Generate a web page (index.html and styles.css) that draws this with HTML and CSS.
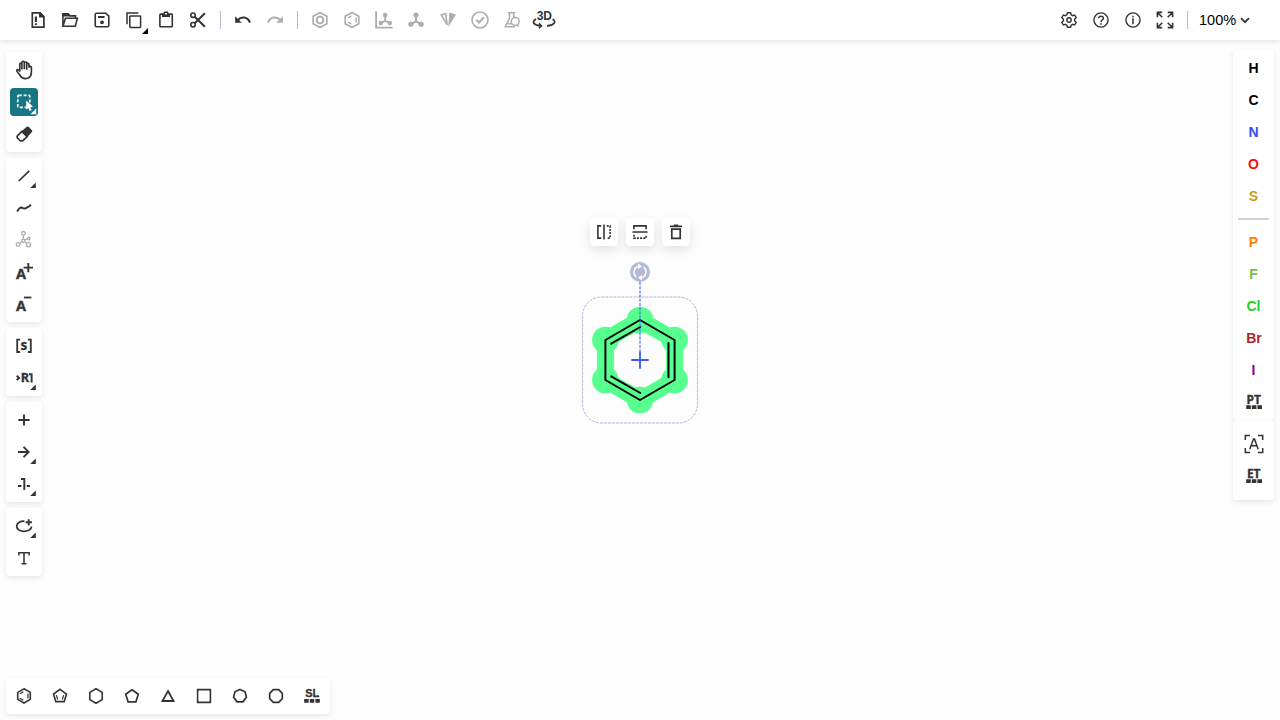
FILE: index.html
```html
<!DOCTYPE html>
<html lang="en">
<head>
<meta charset="utf-8">
<title>Structure editor</title>
<link rel="stylesheet" href="styles.css">
</head>
<body>
<div class="app">
<header class="topbar">
  <button class="tool"><svg viewBox="-16 -16 32 32"><path d="M-5.7-7.2H2L5.9-3.2V7.2H-5.7Z" stroke-width="1.7"/><path class="fill" d="M1-8V-2.6H6.5V-3.6L2.4-8Z"/><path d="M-2.1-3.6V2M-2.1 3.2V5" stroke-width="2.1"/></svg></button>
  <button class="tool"><svg viewBox="-16 -16 32 32"><path d="M-7.1 6.2V-6.1H-2L-.2-4.2H5.4V-1.8M-7 6.2L-4.6-1.7H7.4L5.3 6.2Z"/><path class="fill" d="M-7.9-6.9H-1.7L.1-5H6.2V-3.4H-7.9Z"/></svg></button>
  <button class="tool"><svg viewBox="-16 -16 32 32"><path d="M-6.8-5.3Q-6.8-6.8-5.3-6.8H3.8L6.8-3.8V5.3Q6.8 6.8 5.3 6.8H-5.3Q-6.8 6.8-6.8 5.3Z"/><path d="M-4-3H2.6" stroke-width="2"/><circle class="fill" cx="0" cy="2.3" r="1.9"/></svg></button>
  <button class="tool"><svg viewBox="-16 -16 32 32"><path d="M-7 4.3V-7.1H4.3" stroke-width="1.5"/><rect x="-4.2" y="-4.1" width="10.8" height="11.5" rx=".7" stroke-width="1.5"/><path class="corner" d="M14 8V14H8Z"/></svg></button>
  <button class="tool"><svg viewBox="-16 -16 32 32"><rect x="-6.1" y="-5.9" width="12.4" height="12.7" rx=".7"/><path class="fill" d="M-4-5.5H-2.4V-7.5Q-2.4-8.4-1.5-8.4H1.5Q2.4-8.4 2.4-7.5V-5.5H4V-2.9H-4Z"/><path class="white" d="M-1-7H1V-5.6H-1Z"/></svg></button>
  <button class="tool"><svg viewBox="-16 -16 32 32"><circle cx="-5" cy="-4.8" r="2.2"/><circle cx="-5" cy="4.7" r="2.2"/><path d="M-3.3-3.2L6.9 6.7M-3.3 3.2L6.9-6.7" stroke-width="2"/></svg></button>
  <span class="vsep"></span>
  <button class="tool"><svg viewBox="-16 -16 32 32"><path d="M-5.2 0C-1.6-4 4.6-3.4 7 2.5" stroke-width="2.1"/><path class="fill" d="M-7.8-3.8V2.8H-1.2Z"/></svg></button>
  <button class="tool off"><svg viewBox="-16 -16 32 32"><path d="M5.2 0C1.6-4-4.6-3.4-7 2.5" stroke-width="2.1"/><path class="fill" d="M7.8-3.8V2.8H1.2Z"/></svg></button>
  <span class="vsep"></span>
  <button class="tool off"><svg viewBox="-16 -16 32 32"><path d="M0-7.6L6.8-3.8V3.8L0 7.6L-6.8 3.8V-3.8Z" stroke-width="1.7"/><circle r="3.4" stroke-width="2"/></svg></button>
  <button class="tool off"><svg viewBox="-16 -16 32 32"><path d="M0-7.6L6.8-3.8V3.8L0 7.6L-6.8 3.8V-3.8Z" stroke-width="1.7"/><path d="M-4-2L-.7-4.2M-4 2L-.7 4.2M4.1-2.6V2.6" stroke-width="1.5"/></svg></button>
  <button class="tool off"><svg viewBox="-16 -16 32 32"><path d="M-7.9-8.8V7.6H8.6" stroke-width="1.8"/><path d="M1.2-5V.8L-3.2 3M1.2.8L5.8 3" stroke-width="1.9"/><circle class="fill" cx="1.2" cy="-4.9" r="2.3"/><circle class="fill" cx="-3.2" cy="3" r="2.2"/><circle class="fill" cx="5.8" cy="3" r="2.2"/></svg></button>
  <button class="tool off"><svg viewBox="-16 -16 32 32"><path d="M0-5V1.3L-5 4M0 1.3L5 4" stroke-width="2.1"/><circle class="fill" cx="0" cy="-4.9" r="2.6"/><circle class="fill" cx="-5.1" cy="4.2" r="2.6"/><circle class="fill" cx="5.1" cy="4.2" r="2.6"/></svg></button>
  <button class="tool off"><svg viewBox="-16 -16 32 32"><path d="M-6.7-5L-2.4-6.4L-.8 4.8Z" stroke-width="1.6"/><path class="fill" d="M1.3-7.4L8-5.4L.3 7Z"/></svg></button>
  <button class="tool off"><svg viewBox="-16 -16 32 32"><circle r="8"/><path d="M-3.7-.2L-1 2.5L4-2.7" stroke-width="2"/></svg></button>
  <button class="tool off"><svg viewBox="-16 -16 32 32"><path d="M-4.2-7.2H3.2M-2.5-7V-2L-6.6 6.8H3M1.8-7V-3" stroke-width="1.6"/><circle cx="3.2" cy="1.4" r="3.9" stroke-width="1.5"/><path d="M-4.2 3.7H0M5 4.8L6.4 6.6" stroke-width="1.5"/></svg></button>
  <button class="tool"><svg viewBox="-16 -16 32 32"><text class="glyph" x=".3" y="0" font-size="12">3D</text><path d="M-8-.9C-13 2-10 5.3-3 5.8M8.6-.9C13 2 9.8 5.5 3 5.8" stroke-width="1.7"/><path d="M-5 3.4L-2.4 5.9L-5 8.2" stroke-width="1.5"/></svg></button>
  <span class="spacer"></span>
  <button class="tool"><svg viewBox="-16 -16 32 32"><path d="M-1.6-7.2H1.6L2.1-5.1L3.6-4.3L5.6-5L7.2-2.3L5.6-.8V.8L7.2 2.3L5.6 5L3.6 4.3L2.1 5.1L1.6 7.2H-1.6L-2.1 5.1L-3.6 4.3L-5.6 5L-7.2 2.3L-5.6.8V-.8L-7.2-2.3L-5.6-5L-3.6-4.3L-2.1-5.1Z" stroke-width="1.4"/><circle r="2.2" stroke-width="1.4"/></svg></button>
  <button class="tool"><svg viewBox="-16 -16 32 32"><circle r="7.1" stroke-width="1.4"/><path d="M-2.3-1.8C-2.1-4.5 2.3-4.6 2.3-1.8C2.3-.1 0 .1 0 2.2M0 3.3V4.8" stroke-width="1.5"/></svg></button>
  <button class="tool"><svg viewBox="-16 -16 32 32"><circle r="7.1" stroke-width="1.4"/><path d="M0-1.8V4.2M0-4.2V-2.7" stroke-width="1.5"/></svg></button>
  <button class="tool"><svg viewBox="-16 -16 32 32"><path d="M-7.6-2.8V-7.6H-2.8M2.8-7.6H7.6V-2.8M-7.6 2.8V7.6H-2.8M2.8 7.6H7.6V2.8M-7.3-7.3L-2.7-2.7M7.3-7.3L2.7-2.7M-7.3 7.3L-2.7 2.7M7.3 7.3L2.7 2.7" stroke-width="1.6"/></svg></button>
  <span class="vsep"></span>
  <button class="zoom"><span>100%</span><svg viewBox="0 0 10 7"><path d="M1 1.2L5 5.2L9 1.2"/></svg></button>
</header>

<main class="workspace">
  <nav class="left">
    <div class="panel">
      <button class="tool"><svg viewBox="-16 -16 32 32"><path transform="translate(0 -.4)" d="M-4.2 2V-5.5C-4.2-7-2.1-7-2.1-5.5V0V-7C-2.1-8.7.3-8.7.3-7V-.4V-6.5C.3-8 2.7-8 2.7-6.5V.1V-5C2.7-6.6 5-6.6 5-5V-1.8C5-3.8 7.4-3.5 7.4-1.8V2.5C7.4 10.8-1.7 10.2-4 5.7L-7 1.8C-8-.5-5.6-.9-4.2 2" stroke-width="1.65"/></svg></button>
      <button class="tool active"><svg viewBox="-16 -16 32 32"><rect x="-6.2" y="-6.6" width="12" height="12" rx="1" stroke-dasharray="3 1.8" stroke-width="1.7"/><path class="cursor" d="M2.2-1.4V7.6L4.3 6L5.7 9L7.7 8.2L6.3 5.2L9 4.8Z"/><path class="corner" d="M12.2 6.5V12.2H6.5Z"/></svg></button>
      <button class="tool"><svg viewBox="-16 -16 32 32"><g transform="scale(1.06)"><path class="fill" d="M-2.3-2.6L2.6-6.8Q3.5-7.5 4.3-6.8L7.5-3.6Q8.2-2.8 7.5-2L3.2 2.9Z"/><path d="M-2.1-2.4L2.9 2.6L-.9 6.1Q-2.7 7.1-4 5.9L-6.2 3.7Q-7.1 2.7-6 1.5Z" stroke-width="1.6"/></g></svg></button>
    </div>
    <div class="panel">
      <button class="tool"><svg viewBox="-16 -16 32 32"><path d="M-5.2 5L5.2-5.1" stroke-width="1.7"/><path class="corner" d="M11.8 6.4V12H6.2Z"/></svg></button>
      <button class="tool"><svg viewBox="-16 -16 32 32"><path d="M-6.9 3.5C-4-1-3-1-1 .2C1.8 1.5 2.4-1 4-1C5.3-1 6-2.1 6.8-3.5" stroke-width="2"/></svg></button>
      <button class="tool off"><svg viewBox="-16 -16 32 32"><g stroke-width="1.3"><circle cx="-.6" cy="-6.7" r="1.8"/><circle cx="-6" cy="4.5" r="1.8"/><circle cx="4.5" cy="4.7" r="2.1"/><circle cx="4.7" cy="-1.4" r="1.3"/><circle cx="-.5" cy=".7" r="1.6"/><path d="M-.6-4.7V-.9M-2 1.6L-4.3 3.6M1-.2L3.4-1M.8 1.6L2.8 3.4"/></g></svg></button>
      <button class="tool"><svg viewBox="-16 -16 32 32"><text class="glyph a" x="-3.1" y="7">A</text><path d="M-.4-4.4H9M4.3-9V.2" stroke-width="1.9"/></svg></button>
      <button class="tool"><svg viewBox="-16 -16 32 32"><text class="glyph a" x="-3.1" y="7">A</text><path d="M-.1-6.5H7.4" stroke-width="1.8"/></svg></button>
    </div>
    <div class="panel">
      <button class="tool"><svg viewBox="-16 -16 32 32"><text class="glyph noto heavy" x="0" y="4" font-size="13.5">s</text><path d="M-3.9-6.3H-6.8V6H-3.9M3.9-6.3H6.8V6H3.9" stroke-width="1.8"/></svg></button>
      <button class="tool"><svg viewBox="-16 -16 32 32"><text class="glyph noto heavy" x=".9" y="4.3" font-size="12.8">R</text><path d="M-7.3-2.3L-4.9-.1L-7.3 2.1M5-3.8H7.6V4.4" stroke-width="2"/><path class="corner" d="M11.8 6.4V12H6.2Z"/></svg></button>
    </div>
    <div class="panel">
      <button class="tool"><svg viewBox="-16 -16 32 32"><path d="M-5.6 0H5.6M0-5.6V5.6" stroke-width="1.9"/></svg></button>
      <button class="tool"><svg viewBox="-16 -16 32 32"><path d="M-6 0H4.5M-.5-5.2L4.7 0L-.5 5.2" stroke-width="1.9"/><path class="corner" d="M11.8 6.4V12H6.2Z"/></svg></button>
      <button class="tool"><svg viewBox="-16 -16 32 32"><path d="M-6 2H-2.6M2.7 2H6M-3-5H.3V6" stroke-width="1.9"/><path class="corner" d="M11.8 6.4V12H6.2Z"/></svg></button>
    </div>
    <div class="panel">
      <button class="tool"><svg viewBox="-16 -16 32 32"><path d="M.5-4.9C-4-5.1-7.3-2.9-7.3.2C-7.3 3.2-4 5.3-.2 5.3C4 5.3 7.5 3.4 7.5.6" stroke-width="1.8"/><path d="M1.6-3.7H7.9M4.7-6.8V-.6" stroke-width="1.9"/><path class="corner" d="M11.8 6.4V12H6.2Z"/></svg></button>
      <button class="tool"><svg viewBox="-16 -16 32 32"><path d="M-5.1-2.6V-5.2H5.1V-2.6M0-5.2V5.7M-2.4 5.7H2.4" stroke-width="1.5"/></svg></button>
    </div>
  </nav>

  <svg class="sheet" viewBox="570 210 140 220">
    <g class="glow">
      <path d="M640 320L674.6 340V380L640 400L605.4 380V340Z"/>
      <circle cx="640" cy="320" r="13.3"/><circle cx="674.6" cy="340" r="13.3"/><circle cx="674.6" cy="380" r="13.3"/><circle cx="640" cy="400" r="13.3"/><circle cx="605.4" cy="380" r="13.3"/><circle cx="605.4" cy="340" r="13.3"/>
    </g>
    <path class="bond" d="M640 320L674.6 340V380L640 400L605.4 380V340ZM611.2 343.7L640.3 327M668.5 343V377.3M611.2 376.3L640.3 393"/>
    <rect class="frame" x="582.5" y="297" width="115" height="126" rx="19"/>
    <path class="lead" d="M640 282V351"/>
    <path class="origin" d="M631.3 360H648.7M640 351.3V368.7"/>
    <circle class="knob" cx="640" cy="272" r="10"/>
    <path class="turn" d="M636.4 276.8A6 6 0 0 1 638.6 266.2M643.6 267.2A6 6 0 0 1 641.4 277.8"/>
    <path class="tips" d="M638.2 263.6L641.8 266.2L638.2 269.2ZM641.8 274.8L638.2 277.8L641.8 280.4Z"/>
  </svg>
  <div class="floating">
    <button class="tool"><svg viewBox="-16 -16 32 32"><path d="M-2.7-6.1H-6.1V6.1H-2.7M0-7.5V7.5" stroke-width="1.6"/><path d="M2.7-6.1H6.1V6.1H2.7" stroke-width="1.6" stroke-dasharray="2 1.2"/></svg></button>
    <button class="tool"><svg viewBox="-16 -16 32 32"><path d="M-6.1-2.7V-6.1H6.1V-2.7M-7.5 0H7.5" stroke-width="1.6"/><path d="M-6.1 2.7V6.1H6.1V2.7" stroke-width="1.6" stroke-dasharray="2 1.2"/></svg></button>
    <button class="tool"><svg viewBox="-16 -16 32 32"><path d="M-6-5.6H6M-2.2-6.6H2.2M-4.2-2.8H4.2V6.3H-4.2Z" stroke-width="1.7"/></svg></button>
  </div>

  <aside class="right">
    <div class="panel atoms">
      <button class="atom h">H</button><button class="atom c">C</button><button class="atom n">N</button><button class="atom o">O</button><button class="atom s">S</button>
      <span class="hsep"></span>
      <button class="atom p">P</button><button class="atom f">F</button><button class="atom cl">Cl</button><button class="atom br">Br</button><button class="atom i">I</button>
      <button class="tool"><svg viewBox="-16 -16 32 32"><text class="glyph noto heavy" x="-.3" y="1.6" font-size="12">PT</text><path class="fill" d="M-7.8 3.3H-3.2V7H-7.8ZM-2.2 3.3H2.4V7H-2.2ZM3.4 3.3H8V7H3.4Z"/></svg></button>
    </div>
    <div class="panel extra">
      <button class="tool"><svg viewBox="-16 -16 32 32"><path d="M-8.7-4V-8.6H-4M4-8.6H8.7V-4M-8.7 4V8.6H-4M4 8.6H8.7V4" stroke-width="1.5"/><path d="M-4.2 5.3L-.5-4.9H.5L4.2 5.3M-2.9 1.7H2.9" stroke-width="1.5"/></svg></button>
      <button class="tool"><svg viewBox="-16 -16 32 32"><text class="glyph noto heavy" x="-.3" y="1.6" font-size="12">ET</text><path class="fill" d="M-7.8 3.3H-3.2V7H-7.8ZM-2.2 3.3H2.4V7H-2.2ZM3.4 3.3H8V7H3.4Z"/></svg></button>
    </div>
  </aside>
</main>

<footer class="panel rings">
  <button class="tool"><svg viewBox="-16 -16 32 32"><path d="M0-7.2L6.3-3.6V3.4L0 7L-6.3 3.4V-3.6Z" stroke-width="1.6"/><path d="M-4.2-2.2L-.6-4.3M-4.2 2.2L-.6 4.3M4-2.6V2.6" stroke-width="1.2"/></svg></button>
  <button class="tool"><svg viewBox="-16 -16 32 32"><path d="M0-6.7L6.5-1.9L4.2 5.6H-4.2L-6.5-1.9Z" stroke-width="1.6"/><path d="M-3.6-.9L-2.3 3.5M3.6-.9L2.3 3.5" stroke-width="1.2"/></svg></button>
  <button class="tool"><svg viewBox="-16 -16 32 32"><path d="M0-7.2L6.2-3.6V3.6L0 7.2L-6.2 3.6V-3.6Z" stroke-width="1.6"/></svg></button>
  <button class="tool"><svg viewBox="-16 -16 32 32"><path d="M0-6.2L6.3-1.8L3.9 5.8H-3.9L-6.3-1.8Z" stroke-width="1.7"/></svg></button>
  <button class="tool"><svg viewBox="-16 -16 32 32"><path d="M0-5L5.6 5H-5.6Z" stroke-width="1.8"/></svg></button>
  <button class="tool"><svg viewBox="-16 -16 32 32"><path d="M-6.4-6.4H6.4V6.4H-6.4Z" stroke-width="1.6"/></svg></button>
  <button class="tool"><svg viewBox="-16 -16 32 32"><path d="M0-6.5L5.1-4.2L6.4 1.3L2.9 5.8H-2.9L-6.4 1.3L-5.1-4.2Z" stroke-width="1.7"/></svg></button>
  <button class="tool"><svg viewBox="-16 -16 32 32"><path d="M-2.7-6.3H2.7L6.3-2.7V2.7L2.7 6.3H-2.7L-6.3 2.7V-2.7Z" stroke-width="1.7"/></svg></button>
  <button class="tool"><svg viewBox="-16 -16 32 32"><text class="glyph heavy" x=".2" y=".9" font-size="11">SL</text><path class="fill" d="M-7.8 3.1H-3.4V6.8H-7.8ZM-2.2 3.1H2.2V6.8H-2.2ZM3.4 3.1H7.8V6.8H3.4Z"/></svg></button>
</footer>
</div>
</body>
</html>
```
FILE: styles.css
```css
* { box-sizing: border-box; }
body { margin: 0; background: #fdfdfd; font-family: "Liberation Sans", Arial, sans-serif; }
button { border: 0; padding: 0; margin: 0; background: none; font: inherit; color: inherit; }
.app { width: 1280px; height: 720px; display: flex; flex-direction: column; overflow: hidden; }
.topbar { flex: 0 0 40px; display: flex; align-items: center; padding-left: 22px; background: #fff; box-shadow: 0 2px 5px rgba(103, 104, 132, .15); }
.tool { display: flex; align-items: center; justify-content: center; width: 32px; height: 28px; color: #333; border-radius: 4px; }
.tool svg { width: 32px; height: 32px; flex: none; fill: none; stroke: currentColor; stroke-width: 1.6; overflow: visible; }
.tool .fill, .tool .corner, .tool .cursor { fill: currentColor; stroke: none; }
.tool .white { fill: #fff; stroke: none; }
.topbar .corner { fill: #000; }
.glyph { fill: currentColor; stroke: none; font-family: "Liberation Sans", Arial, sans-serif; font-weight: 700; text-anchor: middle; }
.noto { font-family: "Noto Sans", sans-serif; }
.heavy { stroke: currentColor; stroke-width: .3; }
.a { font-family: "Noto Sans", sans-serif; font-size: 14.5px; stroke: currentColor; stroke-width: .3; }
.off { color: #adadad; }
.vsep { width: 1px; height: 18px; margin: 0 6px; background: #b4b9d6; }
.spacer { flex: 1; }
.zoom { display: flex; align-items: center; width: 86px; padding-left: 5px; gap: 4px; font-size: 14.5px; color: #000; }
.zoom span { width: 37px; padding-bottom: 1px; }
.zoom svg { width: 10px; height: 7px; fill: none; stroke: #333; stroke-width: 1.7; }
.workspace { flex: 1; min-height: 0; display: flex; justify-content: space-between; padding: 10px 6px 0; position: relative; }
.panel { background: #fff; border-radius: 4px; box-shadow: 0 2px 5px rgba(103, 104, 132, .15); }
.left { display: flex; flex-direction: column; gap: 6px; padding-top: 2px; width: 36px; }
.left .panel { display: flex; flex-direction: column; gap: 4px; padding: 4px; }
.left .tool { width: 28px; }
.tool.active { background: #167782; color: #fff; }
.right { width: 41px; }
.right .panel { display: flex; flex-direction: column; align-items: center; }
.atoms { height: 370px; padding-top: 2px; }
.extra { height: 80px; padding-top: 8px; }
.right .tool { width: 41px; height: 32px; }
.right .tool svg { margin-left: 1px; }
.atom { height: 32px; width: 41px; font-size: 14px; font-weight: 700; line-height: 32px; text-align: center; }
.hsep { width: 31px; height: 2px; margin: 6px 0; background: #cad3dd; }
.h, .c { color: #000; }
.n { color: #304ff7; }
.o { color: #ff0d0d; }
.s { color: #c99a19; }
.p { color: #ff8000; }
.f { color: #78bc42; }
.cl { color: #1fd01f; }
.br { color: #a62929; padding-left: 1px; }
.i { color: #940094; }
.rings { flex: none; display: flex; width: 324px; height: 36px; margin: 0 0 6px 6px; align-items: center; }
.rings .tool { width: 36px; }
.sheet { position: absolute; left: 570px; top: 170px; width: 140px; height: 220px; }
.glow circle { fill: #57ff8f; }
.glow path { fill: none; stroke: #57ff8f; stroke-width: 17; }
.bond { fill: none; stroke: #000; stroke-width: 2; stroke-linecap: round; stroke-linejoin: round; }
.frame { fill: none; stroke: #b4b9d6; stroke-dasharray: 3 1; }
.lead { stroke: #365cff; stroke-width: 1.6; stroke-dasharray: 3 1.2; opacity: .65; }
.origin { stroke: #365cff; stroke-width: 1.8; }
.knob { fill: #b4b9d6; }
.turn { fill: none; stroke: #fff; stroke-width: 1.5; }
.tips { fill: #fff; }
.floating { position: absolute; left: 590px; top: 178px; display: flex; gap: 8px; }
.floating .tool { width: 28px; background: #fff; box-shadow: 0 4px 10px rgba(103, 104, 132, .18); }
```
